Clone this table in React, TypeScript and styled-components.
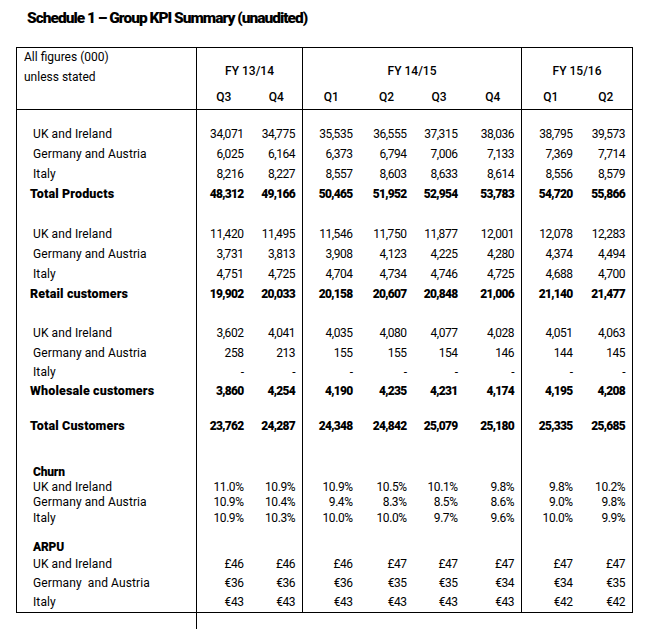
import React from 'react';
import styled, { createGlobalStyle } from 'styled-components';

const Global = createGlobalStyle`
  html, body { margin: 0; padding: 0; background: #fff; }
  body { font-family: Roboto, "Open Sans", sans-serif; color: #000; }
`;

const Page = styled.div`
  width: 650px;
  height: 631px;
  box-sizing: border-box;
  padding: 8px 0 0 16px;
  overflow: hidden;
`;

const Title = styled.h1`
  margin: 0 0 19px 11px;
  font-size: 15.5px;
  line-height: 20px;
  font-weight: 900;
  letter-spacing: -1px;
  white-space: nowrap;
`;

const Table = styled.table`
  border-collapse: collapse;
  table-layout: fixed;
  width: 616px;
  border: 1px solid #000;
  font-size: 12px;
`;

const Group = styled.colgroup<{ $first?: boolean }>`
  border-left: ${(p) => (p.$first ? 'none' : '1px solid #000')};
`;

const Col = styled.col<{ $w: number }>`
  width: ${(p) => p.$w}px;
`;

const Head = styled.thead`
  border-bottom: 1px solid #000;
`;

const HeadRow = styled.tr<{ $h: number }>`
  height: ${(p) => p.$h}px;
`;

const CornerCell = styled.th`
  text-align: left;
  vertical-align: top;
  font-weight: 400;
  padding: 0 0 0 7px;
  line-height: 20px;
`;

const CornerText = styled.div`
  margin-top: -1px;
`;

const YearCell = styled.th`
  font-weight: 500;
  text-align: center;
  vertical-align: bottom;
  padding: 0 0 4px;
  line-height: 20px;
`;

const QuarterCell = styled.th`
  font-weight: 500;
  text-align: center;
  vertical-align: middle;
  padding: 0;
  line-height: 14px;
`;

const Row = styled.tr<{ $h: number }>`
  height: ${(p) => p.$h}px;
`;

type Kind = 'item' | 'total' | 'heading' | 'spacer';

const LabelCell = styled.td<{ $kind: Kind }>`
  padding: 0 0 0 ${(p) => (p.$kind === 'total' ? 13 : 16)}px;
  font-size: ${(p) => (p.$kind === 'total' ? 12.5 : 12)}px;
  font-weight: ${(p) => (p.$kind === 'item' ? 400 : 900)};
  letter-spacing: ${(p) => (p.$kind === 'item' ? '0.1px' : p.$kind === 'total' ? '0.15px' : '-0.2px')};
  line-height: 12px;
  vertical-align: middle;
  white-space: pre;
`;

const NumCell = styled.td<{ $bold: boolean }>`
  padding: 0 7px 0 0;
  text-align: right;
  font-weight: ${(p) => (p.$bold ? 900 : 400)};
  letter-spacing: ${(p) => (p.$bold ? '-0.7px' : '-0.45px')};
  line-height: 12px;
  vertical-align: middle;
  white-space: nowrap;
`;

const Tail = styled.div`
  margin-left: 180px;
  width: 0;
  height: 16px;
  border-left: 1px solid #000;
`;

type RowData = { label?: string; values?: string[]; kind: Kind; h: number };

const rows: RowData[] = [
  { kind: 'spacer', h: 14 },
  { label: 'UK and Ireland', kind: 'item', h: 20, values: ['34,071', '34,775', '35,535', '36,555', '37,315', '38,036', '38,795', '39,573'] },
  { label: 'Germany and Austria', kind: 'item', h: 20, values: ['6,025', '6,164', '6,373', '6,794', '7,006', '7,133', '7,369', '7,714'] },
  { label: 'Italy', kind: 'item', h: 20, values: ['8,216', '8,227', '8,557', '8,603', '8,633', '8,614', '8,556', '8,579'] },
  { label: 'Total Products', kind: 'total', h: 20, values: ['48,312', '49,166', '50,465', '51,952', '52,954', '53,783', '54,720', '55,866'] },
  { kind: 'spacer', h: 20 },
  { label: 'UK and Ireland', kind: 'item', h: 20, values: ['11,420', '11,495', '11,546', '11,750', '11,877', '12,001', '12,078', '12,283'] },
  { label: 'Germany and Austria', kind: 'item', h: 20, values: ['3,731', '3,813', '3,908', '4,123', '4,225', '4,280', '4,374', '4,494'] },
  { label: 'Italy', kind: 'item', h: 20, values: ['4,751', '4,725', '4,704', '4,734', '4,746', '4,725', '4,688', '4,700'] },
  { label: 'Retail customers', kind: 'total', h: 20, values: ['19,902', '20,033', '20,158', '20,607', '20,848', '21,006', '21,140', '21,477'] },
  { kind: 'spacer', h: 19 },
  { label: 'UK and Ireland', kind: 'item', h: 20, values: ['3,602', '4,041', '4,035', '4,080', '4,077', '4,028', '4,051', '4,063'] },
  { label: 'Germany and Austria', kind: 'item', h: 20, values: ['258', '213', '155', '155', '154', '146', '144', '145'] },
  { label: 'Italy', kind: 'item', h: 19, values: ['-', '-', '-', '-', '-', '-', '-', '-'] },
  { label: 'Wholesale customers', kind: 'total', h: 19, values: ['3,860', '4,254', '4,190', '4,235', '4,231', '4,174', '4,195', '4,208'] },
  { kind: 'spacer', h: 15 },
  { label: 'Total Customers', kind: 'total', h: 20, values: ['23,762', '24,287', '24,348', '24,842', '25,079', '25,180', '25,335', '25,685'] },
  { kind: 'spacer', h: 29 },
  { label: 'Churn', kind: 'heading', h: 15 },
  { label: 'UK and Ireland', kind: 'item', h: 15, values: ['11.0%', '10.9%', '10.9%', '10.5%', '10.1%', '9.8%', '9.8%', '10.2%'] },
  { label: 'Germany and Austria', kind: 'item', h: 15, values: ['10.9%', '10.4%', '9.4%', '8.3%', '8.5%', '8.6%', '9.0%', '9.8%'] },
  { label: 'Italy', kind: 'item', h: 16, values: ['10.9%', '10.3%', '10.0%', '10.0%', '9.7%', '9.6%', '10.0%', '9.9%'] },
  { kind: 'spacer', h: 14 },
  { label: 'ARPU', kind: 'heading', h: 14 },
  { label: 'UK and Ireland', kind: 'item', h: 20, values: ['£46', '£46', '£46', '£47', '£47', '£47', '£47', '£47'] },
  { label: 'Germany  and Austria', kind: 'item', h: 19, values: ['€36', '€36', '€36', '€35', '€35', '€34', '€34', '€35'] },
  { label: 'Italy', kind: 'item', h: 20, values: ['€43', '€43', '€43', '€43', '€43', '€43', '€42', '€42'] },
];

const groups = [
  { year: 'FY 13/14', quarters: ['Q3', 'Q4'], widths: [54, 52] },
  { year: 'FY 14/15', quarters: ['Q1', 'Q2', 'Q3', 'Q4'], widths: [57, 54, 51, 57] },
  { year: 'FY 15/16', quarters: ['Q1', 'Q2'], widths: [58, 53] },
];

export default function App() {
  return (
    <Page>
      <Global />
      <Title>Schedule 1 – Group KPI Summary (unaudited)</Title>
      <Table>
        <Group $first>
          <Col $w={180} />
        </Group>
        {groups.map((g) => (
          <Group key={g.year}>
            {g.widths.map((w, i) => (
              <Col key={i} $w={w} />
            ))}
          </Group>
        ))}
        <Head>
          <HeadRow $h={37}>
            <CornerCell rowSpan={2}>
              <CornerText>
                All figures (000)
                <br />
                unless stated
              </CornerText>
            </CornerCell>
            {groups.map((g) => (
              <YearCell key={g.year} colSpan={g.quarters.length}>
                {g.year}
              </YearCell>
            ))}
          </HeadRow>
          <HeadRow $h={25}>
            {groups.flatMap((g) =>
              g.quarters.map((q) => <QuarterCell key={g.year + q}>{q}</QuarterCell>)
            )}
          </HeadRow>
        </Head>
        <tbody>
          {rows.map((r, i) => (
            <Row key={i} $h={r.h}>
              <LabelCell $kind={r.kind}>{r.label ?? ''}</LabelCell>
              {Array.from({ length: 8 }).map((_, j) => (
                <NumCell key={j} $bold={r.kind === 'total'}>
                  {r.values ? r.values[j] : ''}
                </NumCell>
              ))}
            </Row>
          ))}
        </tbody>
      </Table>
      <Tail />
    </Page>
  );
}
